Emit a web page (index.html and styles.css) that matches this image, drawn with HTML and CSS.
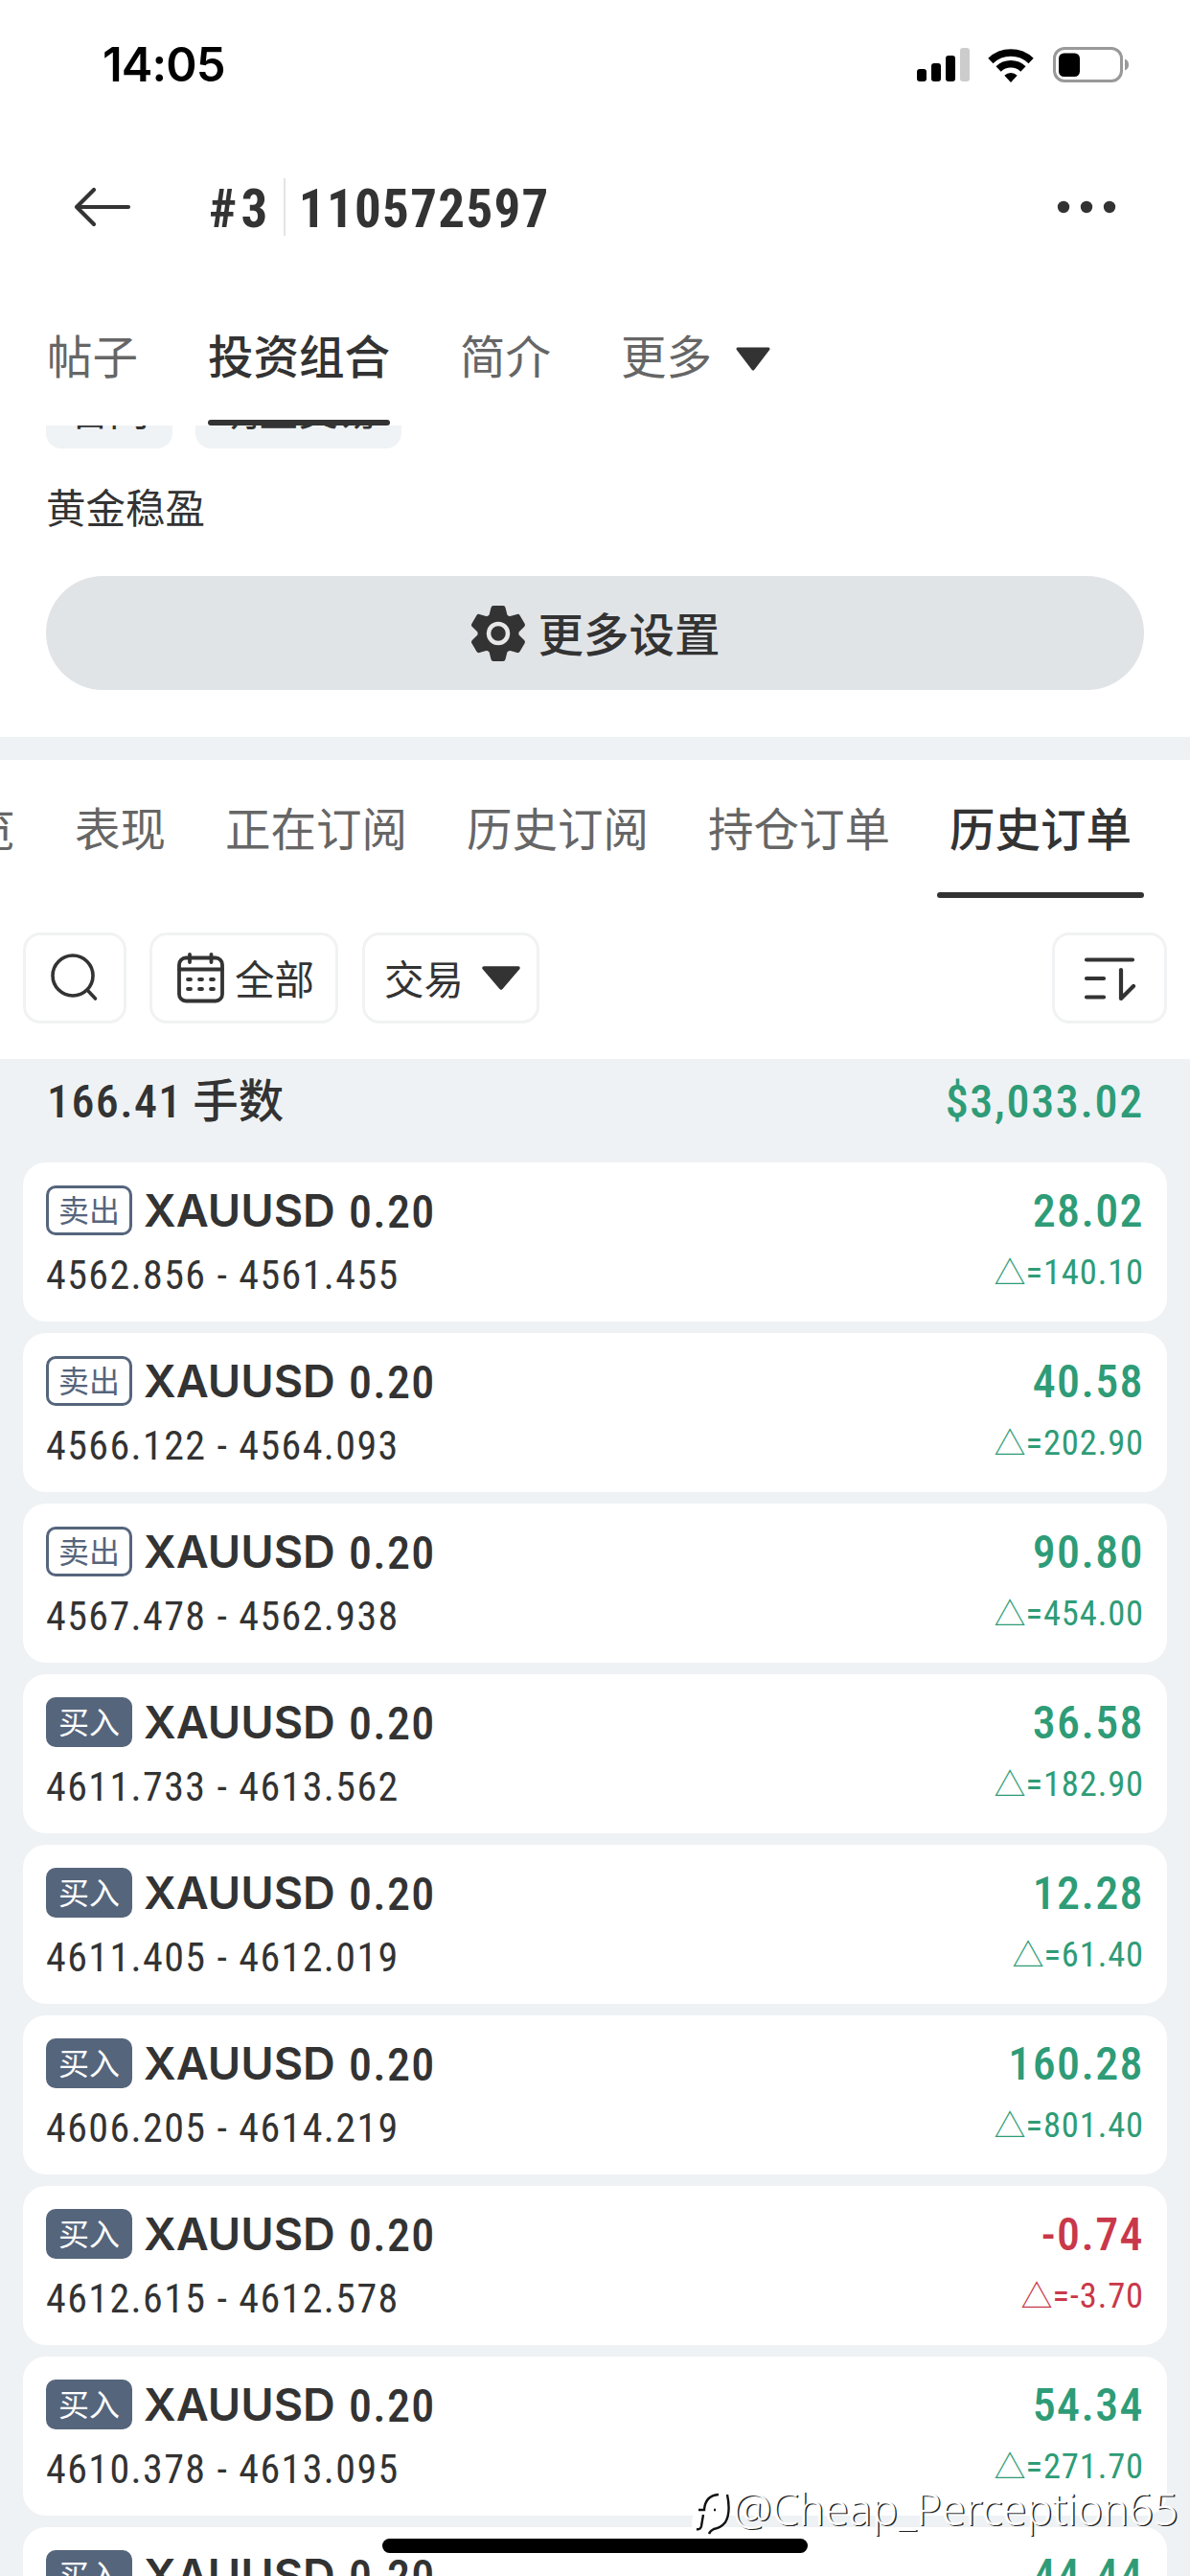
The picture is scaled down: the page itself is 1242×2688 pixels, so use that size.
FILE: index.html
```html
<!DOCTYPE html>
<html lang="zh-CN">
<head>
<meta charset="utf-8">
<title>#3 110572597</title>
<link rel="stylesheet" href="styles.css">
</head>
<body>
<header class="top">
  <div class="status">
    <span class="clock">14:05</span>
    <div class="status-icons">
      <svg class="signal" width="55" height="36" viewBox="0 0 55 36"><rect x="0" y="22" width="10" height="13" rx="3"/><rect x="15" y="16" width="10" height="19" rx="3"/><rect x="30" y="8" width="10" height="27" rx="3"/><rect x="45" y="0" width="10" height="35" rx="3" fill="#ccc"/></svg>
      <svg class="wifi" width="48" height="37" viewBox="0 0 48 37"><g fill="none" stroke="#000" stroke-width="7.6"><path d="M2.9 13.4A30.8 30.8 0 0 1 45.1 13.4"/><path d="M11.1 22A18.6 18.6 0 0 1 36.9 22"/></g><path d="M17.3 28.7A10 10 0 0 1 30.7 28.7L24 36z"/></svg>
      <svg class="battery" width="80" height="38" viewBox="0 0 80 38"><rect x="1.5" y="1.5" width="70" height="34" rx="10.5" fill="none" stroke="#999" stroke-width="3"/><rect x="6" y="6.500" width="22" height="24.500" rx="5.500"/><path d="M75 12.500Q79 14 79 18.500Q79 23 75 24.500z" fill="#999"/></svg>
    </div>
  </div>
  <div class="title-bar">
    <svg class="back" width="60" height="42" viewBox="0 0 60 42"><path d="M57 21H3M21 3L3 21L21 39" fill="none" stroke="#333" stroke-width="4.200" stroke-linecap="round" stroke-linejoin="round"/></svg>
    <h1 class="title"><span class="rank">#3</span><span class="divider"></span><span>110572597</span></h1>
    <svg class="more" width="62" height="14" viewBox="0 0 62 14" fill="#333"><circle cx="7" cy="7" r="6.200"/><circle cx="31" cy="7" r="6.200"/><circle cx="55" cy="7" r="6.200"/></svg>
  </div>
  <nav class="main-tabs">
    <span class="tab">帖子</span>
    <span class="tab active">投资组合</span>
    <span class="tab">简介</span>
    <span class="tab">更多</span>
    <svg class="caret" width="38" height="26" viewBox="0 0 38 26"><path d="M3 2H35L19 23z" fill="#333" stroke="#333" stroke-width="3" stroke-linejoin="round"/></svg>
  </nav>
</header>

<section class="profile">
  <div class="tags"><span class="tag">官网</span><span class="tag">明星交易</span></div>
  <p class="intro">黄金稳盈</p>
  <button class="settings">
    <svg width="58" height="60" viewBox="-29 -30 58 60"><defs><path id="tooth" d="M-10 -17L-7.500 -27Q-7 -29 -5 -29H5Q7 -29 7.500 -27L10 -17z"/></defs><g fill="#333"><circle r="21.500"/><use href="#tooth"/><use href="#tooth" transform="rotate(60)"/><use href="#tooth" transform="rotate(120)"/><use href="#tooth" transform="rotate(180)"/><use href="#tooth" transform="rotate(240)"/><use href="#tooth" transform="rotate(300)"/></g><circle r="10" fill="none" stroke="#e8e8e8" stroke-width="4.500"/></svg>
    <span>更多设置</span>
  </button>
</section>

<section class="orders">
  <nav class="sub-tabs">
    <span class="tab">总览</span>
    <span class="tab">表现</span>
    <span class="tab">正在订阅</span>
    <span class="tab">历史订阅</span>
    <span class="tab">持仓订单</span>
    <span class="tab active">历史订单</span>
  </nav>
  <div class="toolbar">
    <span class="tool search"><svg width="52" height="52" viewBox="0 0 52 52" fill="none" stroke="#333" stroke-width="3.600" stroke-linecap="round"><circle cx="24" cy="24" r="21"/><path d="M40 40L47.500 48"/></svg></span>
    <span class="tool date"><svg width="50" height="54" viewBox="0 0 50 54" fill="none" stroke="#333" stroke-width="3.800" stroke-linecap="round"><rect x="2" y="6.500" width="45" height="45" rx="7"/><path d="M2 18.500H47M13 3V11M35.500 3V11"/><path d="M11 29H14M23 29H26M35 29H38M11 39H14M23 39H26M35 39H38"/></svg>全部</span>
    <span class="tool kind">交易<svg width="42" height="27" viewBox="0 0 42 27"><path d="M3 3H39L21 24z" fill="#333" stroke="#333" stroke-width="3.500" stroke-linejoin="round"/></svg></span>
    <span class="tool sort"><svg width="56" height="48" viewBox="0 0 56 48" fill="none" stroke="#333" stroke-width="4.200" stroke-linecap="round" stroke-linejoin="round"><path d="M3 4.500H51M3 24H21M3 43.500H21M39 15V45L52 32"/></svg></span>
  </div>
</section>

<main class="list">
  <div class="summary"><span class="lots">166.41 <b>手数</b></span><span class="total">$3,033.02</span></div>
  <article class="card"><div><div class="line"><span class="badge sell">卖出</span><span class="symbol">XAUUSD</span><span class="volume">0.20</span></div><div class="prices">4562.856 - 4561.455</div></div><div class="result gain"><div class="profit">28.02</div><div class="delta"><i>△</i>=140.10</div></div></article>
  <article class="card"><div><div class="line"><span class="badge sell">卖出</span><span class="symbol">XAUUSD</span><span class="volume">0.20</span></div><div class="prices">4566.122 - 4564.093</div></div><div class="result gain"><div class="profit">40.58</div><div class="delta"><i>△</i>=202.90</div></div></article>
  <article class="card"><div><div class="line"><span class="badge sell">卖出</span><span class="symbol">XAUUSD</span><span class="volume">0.20</span></div><div class="prices">4567.478 - 4562.938</div></div><div class="result gain"><div class="profit">90.80</div><div class="delta"><i>△</i>=454.00</div></div></article>
  <article class="card"><div><div class="line"><span class="badge buy">买入</span><span class="symbol">XAUUSD</span><span class="volume">0.20</span></div><div class="prices">4611.733 - 4613.562</div></div><div class="result gain"><div class="profit">36.58</div><div class="delta"><i>△</i>=182.90</div></div></article>
  <article class="card"><div><div class="line"><span class="badge buy">买入</span><span class="symbol">XAUUSD</span><span class="volume">0.20</span></div><div class="prices">4611.405 - 4612.019</div></div><div class="result gain"><div class="profit">12.28</div><div class="delta"><i>△</i>=61.40</div></div></article>
  <article class="card"><div><div class="line"><span class="badge buy">买入</span><span class="symbol">XAUUSD</span><span class="volume">0.20</span></div><div class="prices">4606.205 - 4614.219</div></div><div class="result gain"><div class="profit">160.28</div><div class="delta"><i>△</i>=801.40</div></div></article>
  <article class="card"><div><div class="line"><span class="badge buy">买入</span><span class="symbol">XAUUSD</span><span class="volume">0.20</span></div><div class="prices">4612.615 - 4612.578</div></div><div class="result loss"><div class="profit">-0.74</div><div class="delta"><i>△</i>=-3.70</div></div></article>
  <article class="card"><div><div class="line"><span class="badge buy">买入</span><span class="symbol">XAUUSD</span><span class="volume">0.20</span></div><div class="prices">4610.378 - 4613.095</div></div><div class="result gain"><div class="profit">54.34</div><div class="delta"><i>△</i>=271.70</div></div></article>
  <article class="card"><div><div class="line"><span class="badge buy">买入</span><span class="symbol">XAUUSD</span><span class="volume">0.20</span></div></div><div class="result gain"><div class="profit">44.44</div></div></article>
</main>

<div class="home-indicator"></div>
<div class="watermark">
  <svg width="44" height="50" viewBox="0 0 44 50"><path d="M2 40Q2 24 12 12Q24 1 34 3Q42 10 40 26Q38 38 24 42L18 48Q8 44 2 40z" fill="#fff"/><path d="M7 43Q11 44 12 40L14 28M9 23H15Q16 8 30 7M25 23H27M39 7Q43 26 37 36Q32 42 25 43Q21 45 20 48" fill="none" stroke="#111" stroke-width="2.400"/></svg>
  <span>@Cheap_Perception65</span>
</div>
</body>
</html>
```
FILE: styles.css
```css
* { box-sizing: border-box; margin: 0; padding: 0; }

body {
  position: relative;
  width: 1242px;
  height: 2688px;
  overflow: hidden;
  background: #fff;
  color: #333;
  font-family: "Noto Sans CJK SC", sans-serif;
}

svg { display: block; flex: none; }

/* Status bar, title and main tabs */
.top { height: 444px; display: flex; flex-direction: column; }
.status { height: 136px; display: flex; justify-content: space-between; align-items: center; padding: 0 63px 0 107px; }
.clock { font: 600 49px/60px Inter, sans-serif; color: #000; letter-spacing: -0.9px; }
.status-icons { display: flex; align-items: center; }
.wifi { margin-left: 19px; }
.battery { margin-left: 20px; }

.title-bar { height: 160px; display: flex; align-items: center; padding: 0 77px; }
.title { flex: 1; display: flex; align-items: center; margin-left: 81px; font: 700 55px/70px "Roboto Condensed", Roboto, sans-serif; letter-spacing: 1.3px; }
.title span { padding-top: 3px; }
.title .rank { letter-spacing: 4.5px; }
.title .divider { width: 2px; height: 60px; margin: 0 14px 0 12px; background: #e3e5e8; }

.main-tabs { height: 148px; display: flex; gap: 73px; padding-left: 49px; }
.tab { display: block; font-size: 47.5px; line-height: 147px; color: #666; white-space: nowrap; }
.tab.active { position: relative; color: #333; font-weight: 500; }
.tab.active::after { content: ""; position: absolute; left: 0; right: 0; bottom: 0; height: 6px; border-radius: 3px; background: #333; }
.caret { margin: 66px 0 0 -49px; }

/* Profile block scrolled under the header */
.profile { height: 325px; }
.tags { height: 24px; overflow: hidden; display: flex; align-items: flex-end; gap: 24px; padding-left: 48px; }
.tag { flex: none; height: 78px; padding: 0 24.500px; border-radius: 16px; background: #eff3f6; font-size: 41.500px; line-height: 73px; }
.intro { margin: 26px 0 0 48px; font-size: 41.500px; line-height: 68px; }
.settings { display: flex; align-items: center; justify-content: center; gap: 13px; width: 1146px; height: 119px; margin: 39px 0 0 48px; border: 0; border-radius: 60px; background: #e1e4e7; color: #333; font: 500 47.500px/119px "Noto Sans CJK SC", sans-serif; }
.settings span { margin-top: -3px; }

/* Order tabs and filters */
.orders { height: 336px; border-top: 24px solid #eff2f4; }
.sub-tabs { height: 144px; display: flex; gap: 62px; margin-left: -79px; }
.sub-tabs .tab { line-height: 139px; }
.sub-tabs .tab.active::after { left: -13px; right: -13px; }
.toolbar { display: flex; margin: 36px 24px 0; }
.tool { display: flex; align-items: center; height: 95px; border: 3px solid #f1f2f3; border-radius: 18px; font-size: 41.500px; line-height: 82px; padding-bottom: 1px; }
.search { width: 108px; padding-left: 25px; }
.date { width: 197px; margin-left: 24px; padding-left: 26px; gap: 10px; }
.date svg { margin-top: -1px; }
.kind { width: 185px; margin-left: 25px; padding-left: 20px; gap: 18px; }
.sort { width: 120px; margin-left: auto; padding-left: 30px; padding-bottom: 0; }

/* Order list */
.list { height: 1583px; background: #eff2f4; padding: 0 24px; }
.summary { height: 108px; display: flex; justify-content: space-between; padding: 10px 24px 0 25px; font: 500 48px/70px "Roboto Condensed", Roboto, sans-serif; letter-spacing: 1.400px; }
.lots { word-spacing: -2px; }
.lots b { font: 500 47.500px/60px "Noto Sans CJK SC", sans-serif; letter-spacing: 0; }
.total { color: #2e9c77; letter-spacing: 1.700px; }
.card { display: flex; justify-content: space-between; height: 166px; margin-bottom: 12px; padding: 20px 24px 0; border-radius: 24px; background: #fff; }
.line { display: flex; align-items: center; height: 60px; }
.badge { width: 90px; height: 52px; border: 3px solid #55657c; border-radius: 10px; font-size: 32px; line-height: 42px; text-align: center; }
.sell { color: #55657c; }
.buy { color: #fff; background: #55657c; }
.symbol { margin-left: 12px; font: 600 46.800px/60px Inter, sans-serif; }
.volume { margin: 4px 0 0 14px; font: 500 48px/60px "Roboto Condensed", Roboto, sans-serif; letter-spacing: 1.300px; }
.prices { margin-top: 8px; font: 400 42px/60px "Roboto Condensed", Roboto, sans-serif; letter-spacing: 1.400px; }
.result { text-align: right; font-family: "Roboto Condensed", Roboto, sans-serif; }
.profit { padding-top: 1px; font-weight: 500; font-size: 48px; line-height: 60px; letter-spacing: 1.400px; }
.delta { margin-top: 4px; height: 60px; font-weight: 400; font-size: 36.500px; line-height: 60px; letter-spacing: 0.900px; }
.delta i { font: 350 33px/1 "Noto Sans CJK SC", sans-serif; letter-spacing: 0; }
.gain { color: #2e9c77; }
.loss { color: #c9384a; }

/* Overlays */
.home-indicator { position: absolute; left: 399px; top: 2649px; width: 444px; height: 15px; border-radius: 8px; background: #000; }
.watermark { position: absolute; left: 720px; top: 2596px; display: flex; align-items: center; gap: 1px; color: #fff; font: 300 45.300px/56px "Noto Sans", sans-serif; text-shadow: 1.500px 1px 0.500px #222; white-space: nowrap; }
.watermark span { margin-top: -6px; }
```
